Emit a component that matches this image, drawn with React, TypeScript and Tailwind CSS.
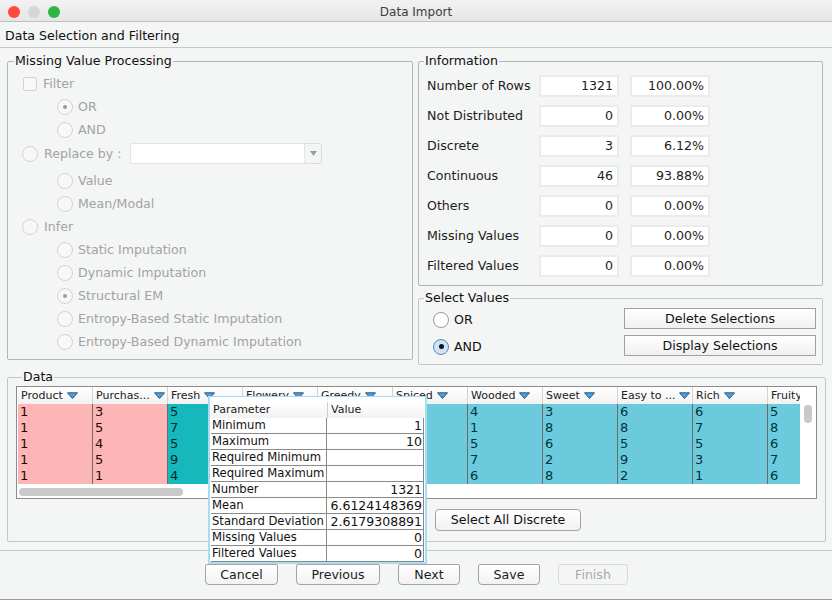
import React from "react";

const F = "[font-family:'DejaVu_Sans',sans-serif]";

function Radio({ checked, active }: { checked?: boolean; active?: boolean }) {
  if (active) {
    return (
      <span
        className={`flex h-[16px] w-[16px] shrink-0 items-center justify-center rounded-full border ${
          checked ? "border-[#5b88b8] bg-[#cfe3f7]" : "border-[#9a9a9a] bg-white"
        }`}
      >
        {checked && <span className="h-[5px] w-[5px] rounded-full bg-[#111]" />}
      </span>
    );
  }
  return (
    <span className="flex h-[16px] w-[16px] shrink-0 items-center justify-center rounded-full border border-[#d2d3d3] bg-[#f8f8f8]">
      {checked && <span className="h-[4px] w-[4px] rounded-full bg-[#9a9a9a]" />}
    </span>
  );
}

function SubOption({ label, checked }: { label: string; checked?: boolean }) {
  return (
    <div className="flex h-[23px] items-center gap-[5px] pl-[49px] text-[#a2a3a3]">
      <Radio checked={checked} />
      <span>{label}</span>
    </div>
  );
}

function TopOption({ label }: { label: string }) {
  return (
    <div className="flex h-[23px] items-center gap-[6px] pl-[14px] text-[#a2a3a3]">
      <Radio />
      <span>{label}</span>
    </div>
  );
}

function InfoRow({ label, a, b }: { label: string; a: string; b: string }) {
  return (
    <div className="flex h-[30px] items-center pl-[8px]">
      <span className="w-[112px] whitespace-nowrap text-[#1c1c1c]">{label}</span>
      <span className="flex h-[22px] w-[80px] items-center justify-end border-2 border-[#ebebeb] bg-white pr-[4px] text-[#1c1c1c]">
        {a}
      </span>
      <span className="ml-[11px] flex h-[22px] w-[80px] items-center justify-end border-2 border-[#ebebeb] bg-white pr-[4px] text-[#1c1c1c]">
        {b}
      </span>
    </div>
  );
}

function SortIcon() {
  return (
    <svg width="11" height="7" viewBox="0 0 11 7" className="ml-[4px] shrink-0">
      <path d="M0.5 0.8H10.5L5.5 6.5Z" fill="#4f9fe0" stroke="#1f4a6b" strokeWidth="0.9" />
    </svg>
  );
}

const columns = [
  { name: "Product", sort: true, bg: "bg-[#fdb6b6]", text: "text-[#2a0505]", vals: ["1", "1", "1", "1", "1"] },
  { name: "Purchas...", sort: true, bg: "bg-[#fdb6b6]", text: "text-[#2a0505]", vals: ["3", "5", "4", "5", "1"] },
  { name: "Fresh", sort: true, bg: "bg-[#17b8bb]", text: "text-[#002a2c]", vals: ["5", "7", "5", "9", "4"] },
  { name: "Flowery", sort: true, bg: "bg-[#6ccadd]", text: "text-[#00323c]", vals: ["6", "4", "2", "8", "3"] },
  { name: "Greedy", sort: true, bg: "bg-[#6ccadd]", text: "text-[#00323c]", vals: ["2", "6", "5", "3", "7"] },
  { name: "Spiced", sort: true, bg: "bg-[#6ccadd]", text: "text-[#00323c]", vals: ["7", "3", "9", "1", "5"] },
  { name: "Wooded", sort: true, bg: "bg-[#6ccadd]", text: "text-[#00323c]", vals: ["4", "1", "5", "7", "6"] },
  { name: "Sweet", sort: true, bg: "bg-[#6ccadd]", text: "text-[#00323c]", vals: ["3", "8", "6", "2", "8"] },
  { name: "Easy to ...", sort: true, bg: "bg-[#6ccadd]", text: "text-[#00323c]", vals: ["6", "8", "5", "9", "2"] },
  { name: "Rich", sort: true, bg: "bg-[#6ccadd]", text: "text-[#00323c]", vals: ["6", "7", "5", "3", "1"] },
  { name: "Fruity", sort: false, bg: "bg-[#6ccadd]", text: "text-[#00323c]", vals: ["5", "8", "6", "7", "6"] },
];

const params: [string, string][] = [
  ["Minimum", "1"],
  ["Maximum", "10"],
  ["Required Minimum", ""],
  ["Required Maximum", ""],
  ["Number", "1321"],
  ["Mean", "6.6124148369"],
  ["Standard Deviation", "2.6179308891"],
  ["Missing Values", "0"],
  ["Filtered Values", "0"],
];

function BottomButton({ label, w, disabled }: { label: string; w: string; disabled?: boolean }) {
  return (
    <button
      className={`h-[21px] ${w} rounded-b-[4px] rounded-t-[2px] border ${
        disabled
          ? "border-[#dadada] bg-[#f4f5f5] text-[#a8a9a9]"
          : "border-[#a3a3a3] bg-gradient-to-b from-white to-[#f2f2f2] text-[#1c1c1c]"
      }`}
    >
      {label}
    </button>
  );
}

export default function App() {
  return (
    <div className={`${F} relative flex h-[600px] w-[832px] flex-col overflow-hidden bg-[#f4f5f5] text-[12.6px] leading-[16px]`}>
      {/* Title bar */}
      <div className="relative flex h-[22px] shrink-0 items-center justify-center border-b border-[#bfbfbf] bg-gradient-to-b from-[#f2f2f2] to-[#e6e6e6] pt-[2px] text-[12px] text-[#3c3c3c]">
        <div className="absolute left-[8px] top-[6px] flex gap-[8px]">
          <span className="h-[12px] w-[12px] rounded-full bg-[#fb4a40]" />
          <span className="h-[12px] w-[12px] rounded-full bg-[#d6d6d6]" />
          <span className="h-[12px] w-[12px] rounded-full bg-[#2fb541]" />
        </div>
        Data Import
      </div>

      {/* Heading */}
      <div className="flex h-[26px] shrink-0 items-center border-b border-[#c6c7c7] pl-[5px] pt-[2px] text-[#111]">
        Data Selection and Filtering
      </div>

      {/* Upper panels */}
      <div className="flex shrink-0 gap-[5px] pl-[7px] pt-[5px]">
        <fieldset className="h-[307px] w-[406px] rounded-[2px] border border-[#b5b6b6] pt-[3px]">
          <legend className="ml-[6px] px-[1px] text-[#111]">Missing Value Processing</legend>
          <div className="flex h-[23px] items-center gap-[6px] pl-[15px] text-[#a2a3a3]">
            <span className="h-[14px] w-[14px] rounded-[2px] border border-[#d2d3d3] bg-[#f8f8f8]" />
            <span>Filter</span>
          </div>
          <SubOption label="OR" checked />
          <SubOption label="AND" />
          <div className="mb-[4px] mt-[1px] flex h-[23px] items-center pl-[14px] text-[#a2a3a3]">
            <Radio />
            <span className="ml-[6px] w-[86px] whitespace-nowrap">Replace by :</span>
            <span className="flex h-[21px] w-[192px]">
              <span className="w-[175px] border border-[#e4e4e4] bg-white" />
              <span className="flex w-[17px] items-center justify-center rounded-r-[3px] border border-l-0 border-[#dcdcdc]">
                <svg width="7" height="5" viewBox="0 0 7 5">
                  <path d="M0 0H7L3.5 5Z" fill="#9b9b9b" />
                </svg>
              </span>
            </span>
          </div>
          <SubOption label="Value" />
          <SubOption label="Mean/Modal" />
          <TopOption label="Infer" />
          <SubOption label="Static Imputation" />
          <SubOption label="Dynamic Imputation" />
          <SubOption label="Structural EM" checked />
          <SubOption label="Entropy-Based Static Imputation" />
          <SubOption label="Entropy-Based Dynamic Imputation" />
        </fieldset>

        <div className="flex w-[405px] flex-col gap-[4px]">
          <fieldset className="h-[233px] rounded-[2px] border border-[#b5b6b6] pt-[2px]">
            <legend className="ml-[5px] px-[1px] text-[#111]">Information</legend>
            <InfoRow label="Number of Rows" a="1321" b="100.00%" />
            <InfoRow label="Not Distributed" a="0" b="0.00%" />
            <InfoRow label="Discrete" a="3" b="6.12%" />
            <InfoRow label="Continuous" a="46" b="93.88%" />
            <InfoRow label="Others" a="0" b="0.00%" />
            <InfoRow label="Missing Values" a="0" b="0.00%" />
            <InfoRow label="Filtered Values" a="0" b="0.00%" />
          </fieldset>
          <fieldset className="h-[75px] rounded-[2px] border border-[#c4c5c5]">
            <legend className="ml-[5px] px-[1px] text-[#111]">Select Values</legend>
            <div className="flex justify-between pl-[14px] pr-[6px] pt-[2px]">
              <div className="flex flex-col gap-[10px] pt-[3px] text-[#111]">
                <div className="flex h-[17px] items-center gap-[5px]">
                  <Radio active />
                  <span>OR</span>
                </div>
                <div className="flex h-[17px] items-center gap-[5px]">
                  <Radio active checked />
                  <span>AND</span>
                </div>
              </div>
              <div className="flex flex-col gap-[6px]">
                <button className="h-[21px] w-[192px] border border-[#a0a0a0] bg-gradient-to-b from-white to-[#f0f0f0] text-[#111]">
                  Delete Selections
                </button>
                <button className="h-[21px] w-[192px] border border-[#a0a0a0] bg-gradient-to-b from-white to-[#f0f0f0] text-[#111]">
                  Display Selections
                </button>
              </div>
            </div>
          </fieldset>
        </div>
      </div>

      {/* Data panel */}
      <div className="pl-[7px] pr-[8px]">
        <fieldset className="mt-[4px] h-[173px] rounded-[2px] border border-[#c4c5c5] px-[8px]">
          <legend className="ml-[6px] px-[1px] text-[#111]">Data</legend>
          <div className="relative mt-[1px] h-[113px] w-[801px] overflow-hidden border border-[#8c8c8c] bg-white">
            <div className="flex h-[97px] w-[783px] overflow-hidden pl-[1px]">
              {columns.map((c) => (
                <div key={c.name} className="w-[75px] shrink-0">
                  <div className="flex h-[17px] items-center overflow-hidden whitespace-nowrap border-r border-[#d4d4d4] bg-gradient-to-b from-white to-[#f2f2f2] pl-[3px] text-[11px] text-[#222]">
                    {c.name}
                    {c.sort && <SortIcon />}
                  </div>
                  <div className={`${c.bg} ${c.text} h-[80px] border-r border-[#6b6b6b] pl-[2px] text-[13px]`}>
                    {c.vals.map((v, i) => (
                      <div key={i} className="h-[16px] leading-[16px]">
                        {v}
                      </div>
                    ))}
                  </div>
                </div>
              ))}
            </div>
            <div className="absolute bottom-[2px] left-[2px] h-[8px] w-[164px] rounded-full bg-[#c9c9c9]" />
            <div className="absolute left-[787px] top-[18px] h-[18px] w-[8px] rounded-full bg-[#c9c9c9]" />
          </div>
          <div className="mt-[10px] flex pl-[419px]">
            <button className="h-[22px] w-[146px] rounded-[4px] border border-[#a3a3a3] bg-gradient-to-b from-white to-[#f2f2f2] text-[#111]">
              Select All Discrete
            </button>
          </div>
        </fieldset>
      </div>

      {/* Footer */}
      <div className="mt-[8px] flex flex-1 gap-[18px] border-t border-[#c6c7c7] pl-[205px] pt-[13px]">
        <BottomButton label="Cancel" w="w-[73px]" />
        <BottomButton label="Previous" w="w-[84px]" />
        <BottomButton label="Next" w="w-[62px]" />
        <BottomButton label="Save" w="w-[62px]" />
        <BottomButton label="Finish" w="w-[70px]" disabled />
      </div>
      <div className="h-px shrink-0 bg-[#9a9a9a]" />

      {/* Popup */}
      <div className="absolute left-[208px] top-[396px] h-[168px] w-[219px] border-x-2 border-b-2 border-t border-[#a9dcf3] bg-white pb-[1px] pl-[1px] pr-[1px] pt-[5px]">
        <div className="flex h-[16px] items-center bg-gradient-to-b from-white to-[#f2f2f2] text-[11px] text-[#222]">
          <span className="w-[116px] pl-[2px]">Parameter</span>
          <span className="border-l border-[#cfcfcf] pl-[3px]">Value</span>
        </div>
        <div>
          {params.map(([k, v]) => (
            <div key={k} className="flex h-[16px] border-b border-[#8a8a8a] text-[#111]">
              <span className="w-[116px] shrink-0 whitespace-nowrap border-r border-[#8a8a8a] pl-[1px] text-[11.6px] leading-[15px]">{k}</span>
              <span className="flex-1 overflow-hidden whitespace-nowrap border-r border-[#8a8a8a] pr-[1px] text-right text-[12.5px] leading-[15px]">{v}</span>
            </div>
          ))}
        </div>
      </div>
    </div>
  );
}
